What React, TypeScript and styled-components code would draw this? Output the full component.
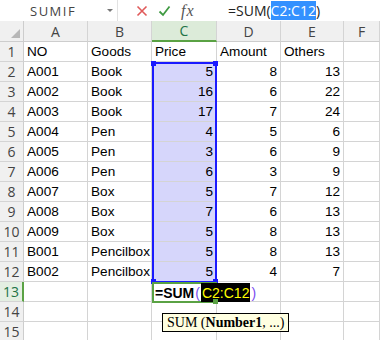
import React from 'react';
import styled, { createGlobalStyle } from 'styled-components';

const GlobalStyle = createGlobalStyle`
  body {
    margin: 0;
    background: #fff;
    font-family: 'Liberation Sans', Arial, sans-serif;
  }
`;

const Window = styled.div`
  width: 380px;
  height: 340px;
  overflow: hidden;
  background: #fff;
`;

const FormulaBar = styled.div`
  height: 21px;
  display: flex;
  align-items: stretch;
  background: #fff;
`;

const NameBox = styled.div`
  width: 118px;
  display: flex;
  align-items: center;
  justify-content: space-between;
  padding: 0 4px 0 30px;
  box-sizing: border-box;
  font-family: 'Open Sans', sans-serif;
  font-size: 13px;
  letter-spacing: 1.5px;
  color: #444;
  border-right: 1px solid #e2e2e2;
`;

const DropArrow = styled.span`
  width: 0;
  height: 0;
  border-left: 3px solid transparent;
  border-right: 3px solid transparent;
  border-top: 3px solid #777;
`;

const Controls = styled.div`
  width: 92px;
  display: flex;
  align-items: center;
  gap: 10px;
  padding-left: 18px;
  box-sizing: border-box;
`;

const Fx = styled.span`
  font-family: 'Liberation Serif', serif;
  font-style: italic;
  font-size: 16px;
  color: #555;
  letter-spacing: 1px;
`;

const FormulaText = styled.div`
  flex: 1;
  display: flex;
  align-items: center;
  padding-left: 18px;
  font-family: 'Open Sans', sans-serif;
  font-size: 14px;
  color: #222;
  white-space: pre;
`;

const RefMark = styled.span`
  background: #3391ff;
  color: #fff;
`;

const Sheet = styled.div`
  position: relative;
  display: grid;
  grid-template-columns: 24px 64px 64px 65px 64px 63px 1fr;
  grid-template-rows: 21px;
  grid-auto-rows: 20px;
`;

const Corner = styled.div`
  background: #f0f0f0;
  border-right: 1px solid #cdcdcd;
  border-bottom: 1px solid #cdcdcd;
  box-sizing: border-box;
  position: relative;
  &::after {
    content: '';
    position: absolute;
    right: 3px;
    bottom: 3px;
    border-left: 9px solid transparent;
    border-bottom: 9px solid #b7b7b7;
  }
`;

const ColHead = styled.div<{ $active?: boolean }>`
  display: flex;
  align-items: center;
  justify-content: center;
  box-sizing: border-box;
  font-size: 14px;
  font-family: 'Open Sans', sans-serif;
  background: ${(p) => (p.$active ? '#dcebd9' : '#f0f0f0')};
  color: ${(p) => (p.$active ? '#217346' : '#444')};
  border-right: 1px solid #d4d4d4;
  border-bottom: ${(p) => (p.$active ? '2px solid #5aa244' : '1px solid #cdcdcd')};
`;

const RowHead = styled.div<{ $active?: boolean }>`
  display: flex;
  align-items: center;
  justify-content: center;
  box-sizing: border-box;
  font-size: 14px;
  font-family: 'Open Sans', sans-serif;
  background: ${(p) => (p.$active ? '#e4efe2' : '#f0f0f0')};
  color: ${(p) => (p.$active ? '#217346' : '#444')};
  border-bottom: 1px solid #d4d4d4;
  border-right: ${(p) => (p.$active ? '2px solid #5aa244' : '1px solid #cdcdcd')};
`;

const Cell = styled.div<{ $num?: boolean; $sel?: boolean }>`
  display: flex;
  align-items: center;
  justify-content: ${(p) => (p.$num ? 'flex-end' : 'flex-start')};
  padding: 0 3px;
  box-sizing: border-box;
  font-size: 13.6px;
  color: #000;
  white-space: nowrap;
  overflow: hidden;
  background: ${(p) => (p.$sel ? '#d6d6fb' : '#fff')};
  border-right: 1px solid #d4d4d4;
  border-bottom: 1px solid #d4d4d4;
`;

const Selection = styled.div`
  position: absolute;
  left: 152px;
  top: 41px;
  width: 65px;
  height: 221px;
  border: 2px solid #1a1aff;
  box-sizing: border-box;
  pointer-events: none;
`;

const Handle = styled.span<{ $x: 'l' | 'r'; $y: 't' | 'b'; $color?: string }>`
  position: absolute;
  width: 5px;
  height: 5px;
  background: ${(p) => p.$color || '#1a1aff'};
  ${(p) => (p.$x === 'l' ? 'left: -3px;' : 'right: -3px;')}
  ${(p) => (p.$y === 't' ? 'top: -3px;' : 'bottom: -3px;')}
`;

const Editor = styled.div`
  position: absolute;
  left: 152px;
  top: 261px;
  width: 65px;
  height: 21px;
  border: 2px solid #5aa244;
  box-sizing: border-box;
`;

const EditorText = styled.div`
  position: absolute;
  left: 1px;
  top: 0;
  height: 17px;
  display: flex;
  align-items: center;
  font-size: 14px;
  font-weight: bold;
  color: #000;
  white-space: pre;
  background: #fff;
`;

const Paren = styled.span`
  color: #7a4cf0;
  font-weight: normal;
  padding: 0 1px;
`;

const InvertRef = styled.span`
  background: #000;
  color: #ffff00;
  font-weight: normal;
  height: 19px;
  display: flex;
  align-items: center;
  padding: 0 1px;
`;

const Tooltip = styled.div`
  position: absolute;
  left: 162px;
  top: 292px;
  height: 19px;
  padding: 0 4px;
  display: flex;
  align-items: center;
  background: #ffffe1;
  border: 1px solid #000;
  box-sizing: border-box;
  font-family: 'Liberation Serif', serif;
  font-size: 14px;
  color: #000;
  white-space: pre;
`;

const columns = ['A', 'B', 'C', 'D', 'E', 'F'];

const rows: (string | number)[][] = [
  ['NO', 'Goods', 'Price', 'Amount', 'Others'],
  ['A001', 'Book', 5, 8, 13],
  ['A002', 'Book', 16, 6, 22],
  ['A003', 'Book', 17, 7, 24],
  ['A004', 'Pen', 4, 5, 6],
  ['A005', 'Pen', 3, 6, 9],
  ['A006', 'Pen', 6, 3, 9],
  ['A007', 'Box', 5, 7, 12],
  ['A008', 'Box', 7, 6, 13],
  ['A009', 'Box', 5, 8, 13],
  ['B001', 'Pencilbox', 5, 8, 13],
  ['B002', 'Pencilbox', 5, 4, 7],
  [],
  [],
  [],
];

const Cross = () => (
  <svg width="12" height="12" viewBox="0 0 12 12">
    <path d="M1.5 1.5 L10.5 10.5 M10.5 1.5 L1.5 10.5" stroke="#e05a5a" strokeWidth="1.6" fill="none" />
  </svg>
);

const Check = () => (
  <svg width="13" height="12" viewBox="0 0 13 12">
    <path d="M1.5 6.5 L5 10 L11.5 1.5" stroke="#3f9a42" strokeWidth="1.8" fill="none" />
  </svg>
);

const App = () => {
  return (
    <Window>
      <GlobalStyle />
      <FormulaBar>
        <NameBox>
          SUMIF
          <DropArrow />
        </NameBox>
        <Controls>
          <Cross />
          <Check />
          <Fx>fx</Fx>
        </Controls>
        <FormulaText>
          =SUM(<RefMark>C2:C12</RefMark>)
        </FormulaText>
      </FormulaBar>
      <Sheet>
        <Corner />
        {columns.map((c) => (
          <ColHead key={c} $active={c === 'C'}>{c}</ColHead>
        ))}
        {rows.map((r, i) => (
          <React.Fragment key={i}>
            <RowHead $active={i === 12}>{i + 1}</RowHead>
            {columns.map((_, j) => {
              const v = r[j];
              return (
                <Cell key={j} $num={typeof v === 'number'} $sel={j === 2 && i >= 1 && i <= 11}>
                  {v}
                </Cell>
              );
            })}
          </React.Fragment>
        ))}
        <Selection>
          <Handle $x="l" $y="t" />
          <Handle $x="r" $y="t" />
          <Handle $x="l" $y="b" />
          <Handle $x="r" $y="b" />
        </Selection>
        <Editor>
          <EditorText>
            =SUM<Paren>(</Paren>
            <InvertRef>C2:C12</InvertRef>
            <Paren>)</Paren>
          </EditorText>
          <Handle $x="r" $y="b" $color="#5aa244" />
        </Editor>
        <Tooltip>
          SUM (<b>Number1</b>, ...)
        </Tooltip>
      </Sheet>
    </Window>
  );
};

export default App;
